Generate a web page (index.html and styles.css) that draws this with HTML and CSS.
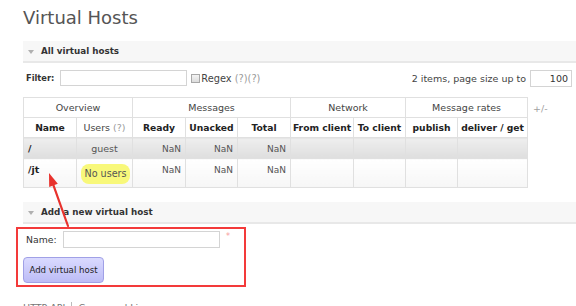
FILE: index.html
```html
<!DOCTYPE html>
<html lang="en">
<head>
    <meta charset="UTF-8">
    <title>Virtual Hosts</title>
    <link rel="stylesheet" href="styles.css">
</head>
<body>
    <div class="main">
        <h1>Virtual Hosts</h1>

        <div class="section">
            <h2 class="section-head"><span class="toggle"></span>All virtual hosts</h2>
            <div class="filter-row">
                <div class="filter-left">
                    <label class="filter-label" for="filter">Filter:</label>
                    <input type="text" id="filter" class="filter-input">
                    <span class="checkbox"></span>
                    <span class="regex">Regex <span class="help">(?)(?)</span></span>
                </div>
                <div class="filter-right">
                    <span>2 items, page size up to</span>
                    <input type="text" class="page-size" value="100">
                </div>
            </div>
            <div class="table-wrap">
                <table class="list">
                    <colgroup>
                        <col style="width: 53px">
                        <col style="width: 56px">
                        <col style="width: 53px">
                        <col style="width: 52px">
                        <col style="width: 53px">
                        <col style="width: 63px">
                        <col style="width: 52px">
                        <col style="width: 52px">
                        <col style="width: 70px">
                    </colgroup>
                    <thead>
                        <tr class="group">
                            <th colspan="2">Overview</th>
                            <th colspan="3">Messages</th>
                            <th colspan="2">Network</th>
                            <th colspan="2">Message rates</th>
                        </tr>
                        <tr>
                            <th>Name</th>
                            <th class="plain">Users <span class="help">(?)</span></th>
                            <th>Ready</th>
                            <th>Unacked</th>
                            <th>Total</th>
                            <th>From client</th>
                            <th>To client</th>
                            <th>publish</th>
                            <th>deliver / get</th>
                        </tr>
                    </thead>
                    <tbody>
                        <tr class="alt1">
                            <td class="name">/</td>
                            <td class="c">guest</td>
                            <td class="r">NaN</td>
                            <td class="r">NaN</td>
                            <td class="r">NaN</td>
                            <td></td>
                            <td></td>
                            <td></td>
                            <td></td>
                        </tr>
                        <tr class="alt2">
                            <td class="name">/jt</td>
                            <td class="c"><span class="no-users">No users</span></td>
                            <td class="r">NaN</td>
                            <td class="r">NaN</td>
                            <td class="r">NaN</td>
                            <td></td>
                            <td></td>
                            <td></td>
                            <td></td>
                        </tr>
                    </tbody>
                </table>
                <span class="plusminus">+/-</span>
            </div>
        </div>

        <div class="section">
            <h2 class="section-head second"><span class="toggle"></span>Add a new virtual host</h2>
            <form class="add-form">
                <div class="form-row">
                    <label for="vhost-name">Name:</label>
                    <input type="text" id="vhost-name" class="name-input">
                    <span class="mand">*</span>
                </div>
                <button type="button" class="add-button">Add virtual host</button>
            </form>
        </div>

        <div class="footer">
            <span>HTTP API</span>
            <span class="sep">Command Line</span>
        </div>
    </div>

    <!-- annotation arrow -->
    <svg class="arrow" width="80" height="240" viewBox="0 0 80 240">
        <line x1="53.4" y1="185.2" x2="68" y2="226" stroke="#e8322d" stroke-width="2.2" stroke-linecap="round"/>
        <polygon points="49,173 57.8,183.8 49.2,187" fill="#e8322d"/>
    </svg>
</body>
</html>
```

FILE: styles.css
```css
body {
    margin: 0;
    font-family: "DejaVu Sans", Verdana, sans-serif;
    font-size: 9.5px;
    color: #444;
    background: #fff;
    overflow: hidden;
}
.main {
    padding-left: 23px;
}
h1 {
    margin: 7px 0 0;
    font-size: 18px;
    line-height: 22px;
    font-weight: normal;
    color: #555;
}
.section-head {
    margin: 12px 0 0;
    height: 20px;
    line-height: 20px;
    font-size: 8.75px;
    font-weight: bold;
    color: #333;
    background: #f7f7f7;
    border-bottom: 2px solid #e8e8e8;
    display: flex;
    align-items: center;
}
.section-head.second {
    margin-top: 14px;
}
.toggle {
    width: 0;
    height: 0;
    border-left: 3.5px solid transparent;
    border-right: 3.5px solid transparent;
    border-top: 4px solid #b0b0b0;
    margin: 1px 7px 0 5px;
}
.filter-row {
    display: flex;
    justify-content: space-between;
    align-items: center;
    margin-top: 6px;
    padding-right: 4px;
    height: 18px;
}
.filter-left,
.filter-right {
    display: flex;
    align-items: center;
}
.filter-label {
    font-weight: bold;
    font-size: 8.3px;
    color: #333;
    margin: 0 6px 0 3px;
}
.filter-input {
    width: 127px;
    height: 16px;
    box-sizing: border-box;
    border: 1px solid #d4d4d4;
    margin: 0;
    padding: 0;
}
.checkbox {
    width: 9px;
    height: 9px;
    box-sizing: border-box;
    border: 1px solid #a8a8a8;
    background: linear-gradient(#f4f4f4, #dcdcdc);
    margin: 0 1px 0 4px;
}
.regex {
    font-size: 9.8px;
}
.help {
    color: #9a9a9a;
}
.filter-right span {
    font-size: 9.5px;
}
.page-size {
    width: 42px;
    height: 17px;
    box-sizing: border-box;
    border: 1px solid #d4d4d4;
    margin: 0 0 0 4px;
    padding: 0 3px 0 0;
    text-align: right;
    font-family: "DejaVu Sans", Verdana, sans-serif;
    font-size: 9.5px;
    color: #333;
}
.table-wrap {
    display: flex;
    align-items: flex-start;
    margin-top: 10px;
}
.list {
    border-collapse: collapse;
    table-layout: fixed;
    width: 504px;
}
.list th,
.list td {
    border: 1px solid #e0e0e0;
    line-height: 12px;
    white-space: nowrap;
    overflow: hidden;
}
.list th {
    padding: 4px 0 3px;
    font-size: 9.2px;
    font-weight: bold;
    color: #222;
    text-align: center;
    background: #fff;
}
.list tr.group th,
.list th.plain {
    font-weight: normal;
    font-size: 9.5px;
    color: #444;
}
.list td {
    padding: 5px 4px 3px;
    vertical-align: top;
    font-size: 9.5px;
    color: #555;
}
.list td.name {
    font-weight: bold;
    color: #222;
    padding-left: 4px;
}
.list td.c {
    text-align: center;
}
.list td.r {
    text-align: right;
    font-size: 9px;
}
.alt1 td {
    background: linear-gradient(#eeeeee, #dedede);
}
.alt2 td {
    background: linear-gradient(#ffffff, #f6f6f6);
}
.no-users {
    display: inline-block;
    background: #f8f87a;
    border-radius: 8px;
    padding: 0 3.5px;
    line-height: 20px;
    font-size: 9.6px;
    color: #555;
}
.plusminus {
    margin: 6px 0 0 5px;
    color: #a0a0a0;
    font-size: 9.5px;
}
.add-form {
    box-sizing: border-box;
    margin: 3px 0 0 -7px;
    width: 230px;
    border: 2px solid #f33a3a;
    padding: 2px 5px;
}
.form-row {
    display: flex;
    align-items: center;
}
.form-row label {
    margin-left: 3px;
    width: 37px;
    color: #333;
    font-size: 9.3px;
}
.name-input {
    width: 157px;
    height: 17px;
    box-sizing: border-box;
    border: 1px solid #d4d4d4;
    margin: 0;
}
.mand {
    color: #f79a9a;
    font-size: 8px;
    margin: -6px 0 0 6px;
}
.add-button {
    display: block;
    margin-top: 9px;
    width: 81px;
    height: 26px;
    border: 1px solid #a0a0e6;
    border-radius: 4px;
    background: linear-gradient(#dadaff, #bcbcf6);
    font-family: "DejaVu Sans", Verdana, sans-serif;
    font-size: 8.6px;
    color: #222;
    padding: 0;
}
.footer {
    display: flex;
    margin-top: 15px;
    line-height: 12px;
    color: #777;
}
.footer .sep {
    border-left: 1px solid #bbb;
    margin-left: 6px;
    padding-left: 6px;
}
.arrow {
    position: absolute;
    left: 0;
    top: 0;
}
```
